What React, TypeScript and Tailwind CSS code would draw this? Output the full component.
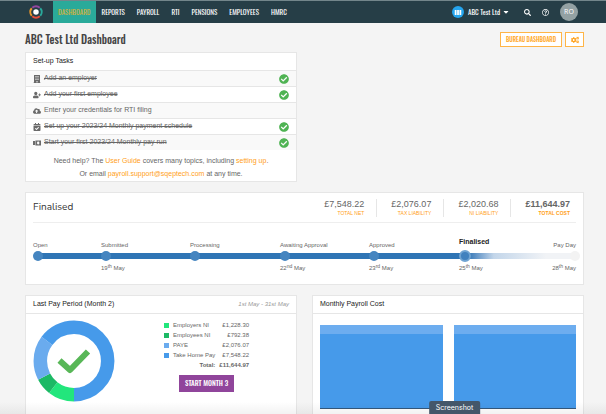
import {
    FaBuilding,
    FaCalendarCheck,
    FaCaretDown,
    FaCheckCircle,
    FaCloudUploadAlt,
    FaCogs,
    FaRegQuestionCircle,
    FaSearch,
    FaUserPlus,
} from "react-icons/fa"

const condensed = "font-['Oswald','Liberation_Sans_Narrow','Roboto_Condensed',sans-serif]"

function BanknotesIcon({ className }: { className?: string }) {
    return (
        <svg viewBox="0 0 20 16" className={className} fill="currentColor">
            <path d="M0 3h5v10H0z" />
            <path fillRule="evenodd" d="M6 2h14v12H6zM13 4.500a3 3.500 0 1 0 0 7a3 3.500 0 1 0 0-7z" />
        </svg>
    )
}

const navItems = ["Dashboard", "Reports", "Payroll", "RTI", "Pensions", "Employees", "HMRC"]

const tasks = [
    { icon: FaBuilding, label: "Add an employer", done: true },
    { icon: FaUserPlus, label: "Add your first employee", done: true },
    { icon: FaCloudUploadAlt, label: "Enter your credentials for RTI filing", done: false },
    { icon: FaCalendarCheck, label: "Set up your 2023/24 Monthly payment schedule", done: true },
    { icon: BanknotesIcon, label: "Start your first 2023/24 Monthly pay run", done: true },
]

const totals = [
    { value: "£7,548.22", label: "Total net" },
    { value: "£2,076.07", label: "Tax liability" },
    { value: "£2,020.68", label: "NI liability" },
    { value: "£11,644.97", label: "Total cost" },
]

const steps = [
    { label: "Open" },
    { label: "Submitted", day: "19", suffix: "th" },
    { label: "Processing" },
    { label: "Awaiting Approval", day: "22", suffix: "nd" },
    { label: "Approved", day: "23", suffix: "rd" },
    { label: "Finalised", day: "25", suffix: "th", current: true },
    { label: "Pay Day", day: "28", suffix: "th", last: true },
]

const breakdown = [
    { label: "Employers NI", amount: 1228.3, text: "£1,228.30", swatch: "bg-[#22e67c]", stroke: "#22e67c" },
    { label: "Employees NI", amount: 792.38, text: "£792.38", swatch: "bg-[#1cb965]", stroke: "#1cb965" },
    { label: "PAYE", amount: 2076.07, text: "£2,076.07", swatch: "bg-[#6aabee]", stroke: "#6aabee" },
    { label: "Take Home Pay", amount: 7548.22, text: "£7,548.22", swatch: "bg-[#469aea]", stroke: "#469aea" },
]

function Logo() {
    return (
        <svg viewBox="0 0 28 28" className="size-[14px]" fill="none" strokeWidth="4">
            <circle cx="14" cy="14" r="5.5" fill="#fff" />
            <path d="M6.500 5.500A11.300 11.300 0 0 1 21.500 5.500" stroke="#93479f" />
            <path d="M22.500 6.500A11.300 11.300 0 0 1 22.500 21.500" stroke="#2aa99b" />
            <path d="M21.500 22.500A11.300 11.300 0 0 1 6.500 22.500" stroke="#e84c39" />
            <path d="M5.500 21.500A11.300 11.300 0 0 1 5.500 6.500" stroke="#ee9a2c" />
        </svg>
    )
}

function Header() {
    return (
        <header className={`flex h-[23px] items-stretch border-t border-[#73868b] bg-[#263e47] pr-7 pl-[29px] text-[7px] text-white ${condensed}`}>
            <a href="#" aria-label="Home" className="mr-[10px] flex items-center">
                <Logo />
            </a>
            <nav className="flex uppercase">
                {navItems.map((item, i) => (
                    <a key={item} href="#" className={`flex items-center ${i === 0 ? "bg-[#2aaa9a] px-[5px] text-[#d6b23c]" : "px-[6px]"}`}>
                        {item}
                    </a>
                ))}
            </nav>
            <div className="ml-auto flex items-center">
                <button type="button" className="flex items-center">
                    <svg viewBox="0 0 24 24" className="mr-1 size-3">
                        <circle cx="12" cy="12" r="12" fill="#25a5ee" />
                        <path d="M5.500 8h3.500v10H5.500zM10.300 8h3.500v10h-3.500zM15 8h3.500v10H15z" fill="#fff" />
                    </svg>
                    ABC Test Ltd
                    <FaCaretDown className="ml-[2px] size-2" />
                </button>
                <button type="button" aria-label="Search" className="ml-[14px]">
                    <FaSearch className="size-[7px]" />
                </button>
                <button type="button" aria-label="Help" className="ml-[11px]">
                    <FaRegQuestionCircle className="size-[7px]" />
                </button>
                <button type="button" className="ml-[11px] size-[18px] rounded-full bg-[#93a1a3] font-['Open_Sans',sans-serif]">
                    RO
                </button>
            </div>
        </header>
    )
}

function SetupTasks() {
    return (
        <section className="border border-[#e6e6e6] bg-white">
            <h2 className="flex h-[17px] items-center px-[7px] text-[#222]">Set-up Tasks</h2>
            <ul>
                {tasks.map(({ icon: Icon, label, done }) => (
                    <li key={label} className="flex h-4 items-center border-t border-[#e6e6e6] px-[7px] odd:bg-[#f9f9f9]">
                        <span className="flex w-[11px] justify-start">
                            <Icon className="size-2 text-[#6a6a6a]" />
                        </span>
                        <span className={done ? "line-through" : ""}>{label}</span>
                        {done && <FaCheckCircle className="ml-auto size-[10px] text-[#4fb353]" />}
                    </li>
                ))}
            </ul>
            <div className="pt-1 pb-px text-center leading-[13px]">
                <p>
                    Need help? The <a href="#" className="text-[#ffa019]">User Guide</a> covers many topics, including{" "}
                    <a href="#" className="text-[#ffa019]">setting up</a>.
                </p>
                <p>
                    Or email <a href="#" className="text-[#ffa019]">payroll.support@sqeptech.com</a> at any time.
                </p>
            </div>
        </section>
    )
}

function Timeline() {
    return (
        <ol className="mt-[17px] grid grid-cols-[68fr_89fr_90fr_89fr_90fr_87fr_30fr] text-[6px]">
            {steps.map((step, i) => (
                <li key={step.label} className={`flex flex-col ${step.last ? "items-end" : ""}`}>
                    <span className={`h-[10px] leading-[10px] whitespace-nowrap ${step.current ? "-mt-[3px] mb-[3px] text-[7px] font-bold text-[#222]" : ""}`}>
                        {step.label}
                    </span>
                    <div className="grid h-3 w-full items-center">
                        <div
                            className={`col-start-1 row-start-1 h-[6px] ${
                                step.last ? "bg-[#f1f3f6]" : step.current ? "bg-linear-to-r from-[#2f75b5] from-10% via-[#c3d6ea] via-40% to-[#f1f3f6]" : "bg-[#2f75b5]"
                            } ${i === 0 ? "ml-1" : ""}`}
                        />
                        <div
                            className={`col-start-1 row-start-1 rounded-full ${
                                step.last
                                    ? "-mr-1 size-[10px] justify-self-end bg-[#f3f3f3]"
                                    : step.current
                                      ? "size-3 border-2 border-[#6fa3d2] bg-[#4181be]"
                                      : "size-[10px] bg-[#4585c0]"
                            }`}
                        />
                    </div>
                    {step.day && (
                        <span className="mt-[2px] leading-[8px] whitespace-nowrap">
                            {step.day}
                            <sup className="text-[5px] leading-none">{step.suffix}</sup> May
                        </span>
                    )}
                </li>
            ))}
        </ol>
    )
}

function Finalised() {
    return (
        <section className="h-[93px] border border-[#e6e6e6] bg-white px-[7px]">
            <div className="flex h-[30px] items-center border-b border-[#eee]">
                <h2 className="font-['Nunito','Open_Sans',sans-serif] text-[10px] text-[#333]">Finalised</h2>
                <dl className="ml-auto flex pr-[6px]">
                    {totals.map((total, i) => (
                        <div
                            key={total.label}
                            className={`flex flex-col-reverse text-right ${i > 0 ? "ml-3 border-l border-[#e6e6e6] pl-[14px]" : ""} ${i === 3 ? "font-bold" : ""}`}
                        >
                            <dt className="text-[5px] leading-[7px] text-[#ffa019] uppercase">{total.label}</dt>
                            <dd className="text-[9px] leading-[11px]">{total.value}</dd>
                        </div>
                    ))}
                </dl>
            </div>
            <Timeline />
        </section>
    )
}

function Donut() {
    const sum = breakdown.reduce((acc, part) => acc + part.amount, 0)
    let offset = 0
    return (
        <svg viewBox="0 0 82 82" className="size-[82px]" role="img" aria-label="Pay breakdown">
            <g transform="rotate(90 41 41)" fill="none" strokeWidth="13.5">
                {breakdown.map((part) => {
                    const share = (part.amount / sum) * 100
                    const start = offset
                    offset += share
                    return (
                        <circle
                            key={part.label}
                            cx="41"
                            cy="41"
                            r="33.7"
                            stroke={part.stroke}
                            pathLength="100"
                            strokeDasharray={`${share} ${100 - share}`}
                            strokeDashoffset={-start}
                        />
                    )
                })}
            </g>
            <path d="M26.500 40.500 37 50 55 31.500" fill="none" stroke="#58b757" strokeWidth="6" strokeLinejoin="round" />
        </svg>
    )
}

function LastPayPeriod() {
    return (
        <section className="border border-[#e6e6e6] bg-white">
            <div className="flex h-[18px] items-center justify-between border-b border-[#e6e6e6] px-[7px]">
                <h2 className="text-[#222]">Last Pay Period (Month 2)</h2>
                <span className="text-[6px] text-[#999] italic">1st May - 31st May</span>
            </div>
            <div className="flex pt-[6px] pl-[7px]">
                <Donut />
                <div className="ml-[49px] flex flex-col items-center">
                    <table className="text-[6px] leading-[10px]">
                        <tbody>
                            {breakdown.map((part) => (
                                <tr key={part.label}>
                                    <td className="pr-1">
                                        <div className={`size-[5px] ${part.swatch}`} />
                                    </td>
                                    <td className="pr-1">{part.label}</td>
                                    <td className="text-right">{part.text}</td>
                                </tr>
                            ))}
                            <tr className="font-bold">
                                <td />
                                <td className="pr-1 text-right">Total:</td>
                                <td className="text-right">£11,644.97</td>
                            </tr>
                        </tbody>
                    </table>
                    <button type="button" className={`mt-[5px] h-[17px] bg-[#90459b] px-[6px] text-[7px] font-medium text-white uppercase ${condensed}`}>
                        Start month 3
                    </button>
                </div>
            </div>
        </section>
    )
}

function MonthlyCost() {
    return (
        <section className="border border-[#e6e6e6] bg-white">
            <h2 className="flex h-[18px] items-center border-b border-[#e6e6e6] px-[7px] text-[#222]">Monthly Payroll Cost</h2>
            <div className="mx-[7px] mt-[11px] grid grid-cols-2 gap-[11px] border-b border-[#34587c]">
                <div className="h-[83px] border-t-[9px] border-[#6dadef] bg-[#469aea]" />
                <div className="h-[83px] border-t-[9px] border-[#6dadef] bg-[#469aea]" />
            </div>
        </section>
    )
}

export default function App() {
    return (
        <div className="relative h-screen overflow-hidden bg-[#f4f4f4] font-['Liberation_Sans',sans-serif] text-[7px] text-[#666]">
            <Header />
            <main className="pr-[22px] pl-[25px]">
                <div className={`flex items-center gap-[3px] pt-[9px] ${condensed}`}>
                    <h1 className="mr-auto text-[11px] leading-[15px] font-medium text-[#444]">ABC Test Ltd Dashboard</h1>
                    <button type="button" className="h-[15px] border border-[#ffb547] bg-white px-[5px] text-[6px] font-medium text-[#ffa726] uppercase">
                        Bureau Dashboard
                    </button>
                    <button type="button" aria-label="Settings" className="flex h-[15px] w-[19px] items-center justify-center border border-[#ffb547] bg-white text-[#ffa019]">
                        <FaCogs className="size-2" />
                    </button>
                </div>
                <div className="mt-[5px] grid grid-cols-2 gap-x-[15px]">
                    <SetupTasks />
                </div>
                <div className="mt-[10px]">
                    <Finalised />
                </div>
                <div className="mt-[10px] grid h-40 grid-cols-2 gap-x-[15px]">
                    <LastPayPeriod />
                    <MonthlyCost />
                </div>
            </main>
            <div className="absolute inset-x-0 bottom-0 h-3 bg-linear-to-b from-transparent to-black/5" />
            <div className="absolute bottom-0 left-[75%] -translate-x-1/2 rounded-t-xs bg-[#44576a] px-[7px] font-['Inter',sans-serif] leading-[13px] text-white">
                Screenshot
            </div>
        </div>
    )
}
